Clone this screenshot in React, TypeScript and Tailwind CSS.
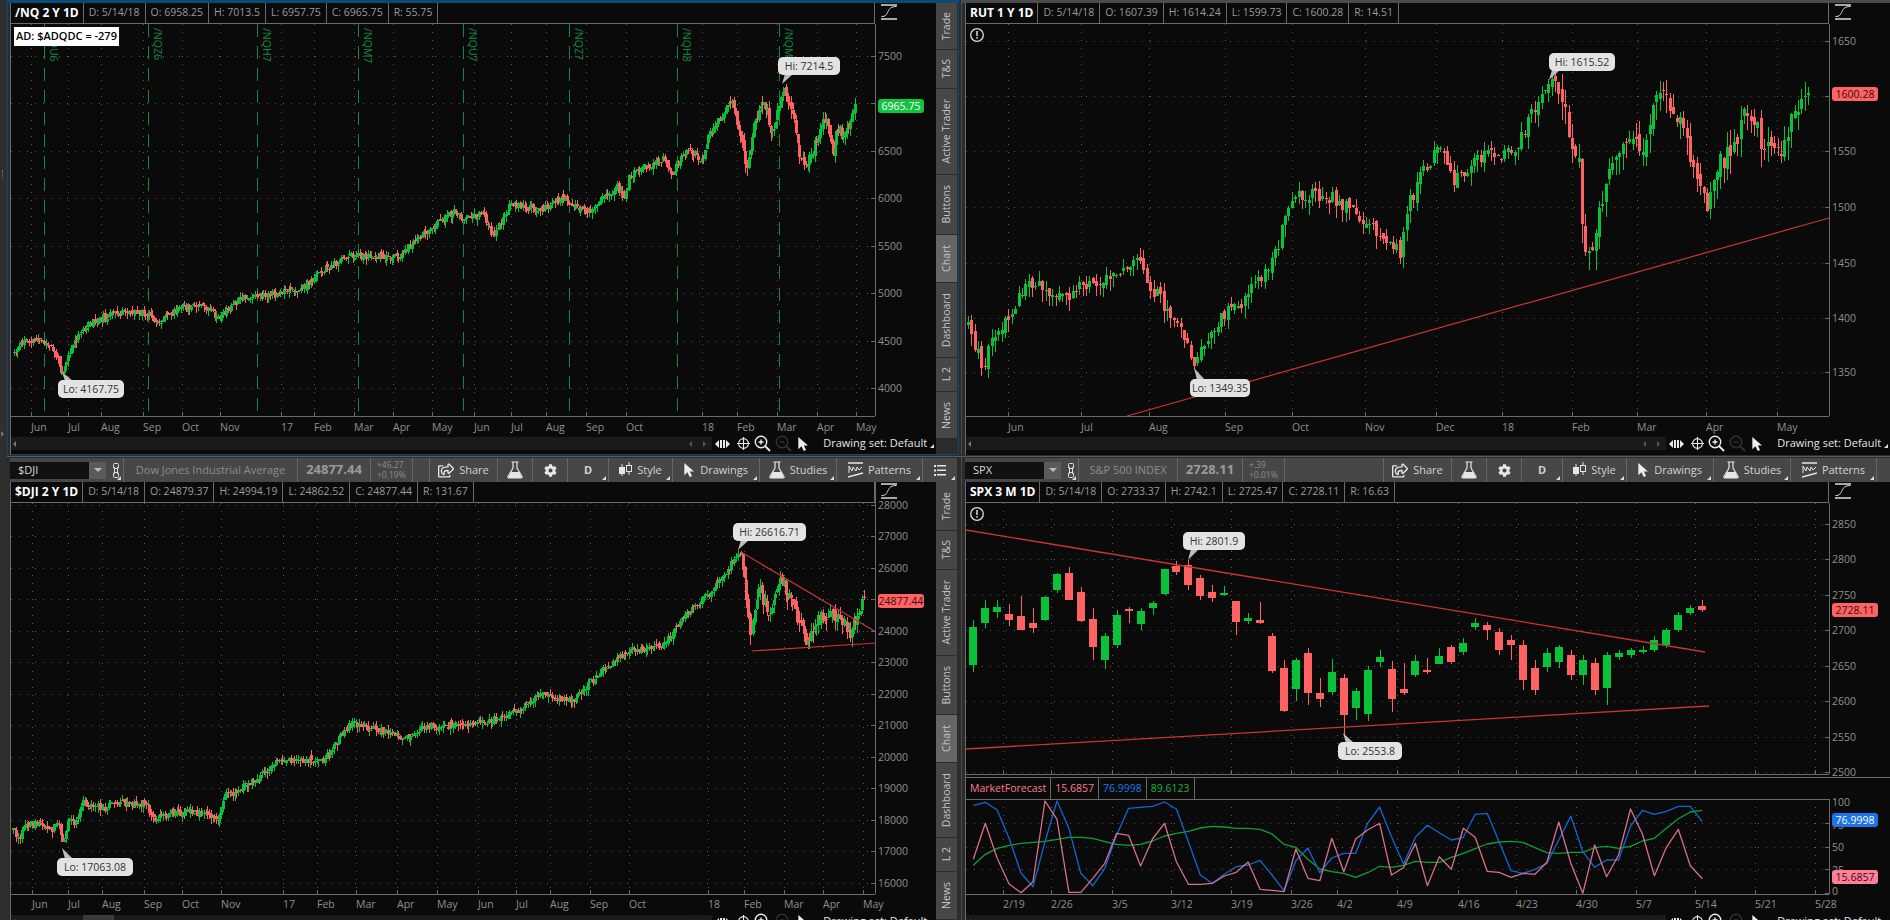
import type { ReactNode } from "react"
import { FaCog, FaRegShareSquare } from "react-icons/fa"

type Pt = [number, number]
type Bar = { x: number; open: number; close: number; high: number; low: number }

const GREEN = "#0ac13a"
const RED = "#ff6262"

// shrunk screenshot coords -> real coords
const up = (pts: Pt[]): Pt[] => pts.map(([x, y]) => [x * 1.2054, y * 1.2054])

function rng(seed: number) {
  let a = seed
  return () => {
    a = (a + 0x6d2b79f5) | 0
    let t = Math.imul(a ^ (a >>> 15), 1 | a)
    t = (t + Math.imul(t ^ (t >>> 7), 61 | t)) ^ t
    return ((t ^ (t >>> 14)) >>> 0) / 4294967296
  }
}

function interp(path: Pt[], x: number) {
  for (let i = 1; i < path.length; i++) {
    if (x <= path[i][0]) {
      const [x0, y0] = path[i - 1]
      const [x1, y1] = path[i]
      return y0 + ((y1 - y0) * (x - x0)) / (x1 - x0 || 1)
    }
  }
  return path[path.length - 1][1]
}

function makeBars(path: Pt[], n: number, seed: number, vol: (x: number) => number): Bar[] {
  const rand = rng(seed)
  const x0 = path[0][0]
  const dx = (path[path.length - 1][0] - x0) / (n - 1)
  let prev = path[0][1]
  return Array.from({ length: n }, (_, i) => {
    const x = x0 + i * dx
    const v = vol(x)
    const close = interp(path, x) + (rand() - 0.5) * v
    const open = prev + (rand() - 0.5) * v * 0.5
    prev = close
    const top = Math.min(open, close)
    const bot = Math.max(open, close)
    return { x, open, close, high: top - rand() * v * 0.7, low: bot + rand() * v * 0.9 }
  })
}

const nqPath: Pt[] = [
  [14, 352], [24, 341], [39, 339], [54, 350], [62, 372], [70, 350], [84, 328], [108, 315], [133, 311], [151, 316], [154, 325],
  [181, 307], [205, 307], [217, 319], [241, 299], [271, 295], [301, 289], [325, 268], [350, 256], [386, 256], [398, 256],
  [422, 235], [456, 210], [463, 220], [483, 213], [493, 237], [510, 205], [540, 210], [562, 198], [587, 212], [617, 187],
  [625, 197], [630, 175], [663, 158], [672, 175], [688, 148], [702, 160], [710, 133], [732, 100], [745, 157], [747, 170],
  [755, 120], [765, 103], [772, 135], [778, 107], [782, 87], [793, 110], [798, 150], [805, 167], [817, 140], [825, 117],
  [833, 153], [837, 128], [845, 137], [855, 103],
]

const rutPath: Pt[] = up([
  [803, 272], [810, 290], [815, 305], [825, 275], [835, 265], [850, 240], [860, 235], [875, 245], [885, 250], [900, 235],
  [920, 232], [935, 218], [945, 215], [955, 238], [970, 260], [980, 272], [990, 303], [1000, 285], [1015, 262], [1030, 250],
  [1050, 225], [1060, 205], [1070, 165], [1075, 160], [1100, 162], [1115, 170], [1130, 180], [1145, 195], [1162, 210],
  [1170, 165], [1185, 135], [1195, 120], [1205, 150], [1220, 140], [1230, 128], [1255, 128], [1270, 95], [1285, 70],
  [1295, 75], [1300, 100], [1310, 140], [1312, 190], [1320, 222], [1325, 180], [1335, 140], [1350, 115], [1362, 120],
  [1372, 85], [1380, 75], [1395, 100], [1402, 135], [1415, 170], [1425, 140], [1440, 120], [1450, 90], [1462, 120],
  [1475, 130], [1483, 110], [1495, 75], [1500, 78],
])

const djiPath: Pt[] = [
  [13, 828], [18, 840], [25, 825], [37, 822], [50, 832], [58, 820], [63, 848], [68, 822], [75, 822], [83, 803], [103, 808],
  [117, 802], [133, 805], [147, 803], [152, 820], [163, 813], [170, 813], [187, 812], [207, 813], [218, 823], [222, 800],
  [227, 793], [237, 792], [255, 780], [277, 762], [325, 759], [350, 723], [386, 732], [410, 738], [422, 727], [482, 723],
  [518, 711], [542, 693], [573, 702], [591, 681], [627, 651], [663, 645], [681, 621], [711, 591], [729, 567], [740, 552],
  [745, 579], [750, 639], [759, 591], [771, 615], [781, 579], [796, 615], [808, 645], [820, 615], [838, 615], [850, 633],
  [858, 615], [864, 600],
]

const nqBars = makeBars(nqPath, 500, 11, (x) => (x > 740 ? 11 : 7))
const rutBars = makeBars(rutPath, 250, 23, (x) => (x > 1560 ? 22 : 14))
const djiBars = makeBars(djiPath, 500, 37, (x) => (x > 740 ? 12 : 7))

// [green, body top, body bottom, wick top, wick bottom], read off a 3x crop at y = 560 + v / 3
const spxMid: [number, number, number, number, number][] = [
  [0, 162, 180, 132, 198], [0, 168, 210, 108, 210], [0, 189, 204, 144, 218], [1, 111, 180, 108, 183], [1, 42, 90, 40, 100],
  [0, 39, 120, 21, 120], [0, 96, 183, 81, 186], [0, 177, 261, 144, 300], [1, 228, 300, 219, 327], [1, 165, 255, 150, 264],
  [0, 147, 153, 141, 189], [1, 153, 192, 144, 210], [1, 129, 144, 123, 165], [1, 27, 102, 27, 105], [0, 18, 36, 3, 45],
  [0, 15, 75, 0, 90], [0, 54, 108, 45, 120], [0, 96, 114, 75, 126], [1, 99, 105, 78, 108], [0, 123, 186, 123, 225],
  [1, 174, 183, 159, 192], [0, 180, 189, 126, 192], [0, 228, 333, 219, 339], [0, 324, 453, 300, 456], [1, 300, 387, 294, 423],
  [0, 279, 399, 264, 435], [0, 399, 417, 354, 441], [1, 336, 396, 297, 405], [0, 354, 465, 342, 525], [1, 393, 444, 384, 480],
  [1, 330, 462, 318, 483], [1, 291, 306, 270, 321], [0, 327, 417, 303, 456], [0, 387, 399, 309, 405], [1, 303, 345, 285, 351],
  [0, 330, 336, 294, 342], [1, 288, 312, 264, 312], [0, 261, 306, 255, 312],
]

const spxRows: [number, number, number, number, number][] = [
  [1, 627, 665, 620, 672], [1, 608, 623, 600, 628], [1, 607, 612, 600, 618],
  ...spxMid.map(([g, a, b, c, d]) => [g, 560 + a / 3, 560 + b / 3, 560 + c / 3, 560 + d / 3] as [number, number, number, number, number]),
  [1, 643, 652, 638, 655], [1, 623, 627, 618, 630], [0, 625, 630, 622, 640], [0, 632, 650, 628, 655], [0, 640, 645, 635, 660],
  [0, 645, 680, 640, 690], [0, 668, 690, 660, 695], [1, 653, 667, 648, 672], [1, 647, 662, 645, 668], [0, 655, 675, 650, 680],
  [1, 660, 675, 655, 685], [0, 663, 690, 658, 695], [1, 655, 688, 652, 705], [1, 653, 657, 650, 660], [1, 650, 655, 648, 658],
  [1, 650, 652, 646, 654], [1, 640, 650, 636, 652], [1, 630, 645, 628, 648], [1, 615, 630, 612, 632], [1, 608, 613, 605, 615],
  [0, 606, 610, 600, 612],
]

const idxX = (i: number) => 973.3 + i * 11.95
const mfY = (vals: number[]) => vals.map((v, i) => `${idxX(i).toFixed(1)},${(740 + v / 3).toFixed(1)}`).join(" ")

const mfBlue = [
  196, 187, 210, 295, 400, 440, 305, 183, 265, 400, 437, 385, 285, 205, 202, 199, 186, 207, 305, 405, 430, 403, 380, 375, 361, 405,
  452, 362, 324, 398, 354, 340, 340, 250, 201, 290, 372, 292, 256, 278, 300, 292, 223, 220, 305, 392, 400, 388, 370, 300, 228, 335,
  382, 360, 360, 258, 211, 223, 214, 199, 199, 245,
]
const mfPink = [
  358, 250, 355, 432, 458, 425, 183, 238, 457, 457, 415, 370, 280, 286, 378, 297, 250, 365, 433, 433, 430, 408, 397, 366, 448, 451,
  455, 327, 415, 422, 295, 395, 297, 270, 250, 405, 383, 310, 437, 350, 388, 265, 292, 394, 397, 412, 400, 403, 367, 246, 370, 460,
  315, 410, 345, 207, 283, 407, 322, 268, 377, 416,
]
const mfGreen = [
  376, 343, 325, 316, 310, 307, 304, 298, 292, 292, 295, 305, 313, 316, 313, 303, 288, 280, 274, 264, 259, 261, 265, 265, 268, 282,
  313, 322, 358, 387, 395, 400, 412, 398, 379, 382, 376, 364, 367, 367, 352, 340, 326, 312, 306, 304, 307, 323, 338, 340, 337, 337,
  323, 319, 325, 319, 303, 295, 265, 236, 216, 211,
]

function Bars({ bars, body }: { bars: Bar[]; body: number }) {
  return (
    <g shapeRendering="crispEdges">
      {bars.map((b, i) => {
        const isUp = b.close < b.open
        const c = isUp ? GREEN : RED
        const x = Math.round(b.x)
        const top = Math.min(b.open, b.close)
        const h = Math.max(Math.abs(b.open - b.close), 1)
        return (
          <g key={i} fill={c}>
            <rect x={x} y={b.high} width={1} height={b.low - b.high} />
            <rect x={x - Math.floor(body / 2)} y={top} width={body} height={h} />
          </g>
        )
      })}
    </g>
  )
}

function Grid({ xs, ys, left, right, top, bottom }: { xs: number[]; ys: number[]; left: number; right: number; top: number; bottom: number }) {
  return (
    <g stroke="#5a5a5a" strokeDasharray="1 7" shapeRendering="crispEdges">
      {xs.map((x) => <line key={x} x1={x} x2={x} y1={top} y2={bottom} />)}
      {ys.map((y) => <line key={y} x1={left} x2={right} y1={y} y2={y} />)}
    </g>
  )
}

function Axes({ axis, left, top, bottom, xs, ys }: { axis: number; left: number; top: number; bottom: number; xs: number[]; ys: number[] }) {
  return (
    <g stroke="#6a6a6a" shapeRendering="crispEdges">
      <line x1={axis} x2={axis} y1={top} y2={bottom} />
      <line x1={left} x2={axis} y1={bottom} y2={bottom} />
      {xs.map((x) => <line key={x} x1={x} x2={x} y1={bottom - 4} y2={bottom} />)}
      {ys.map((y) => <line key={y} x1={axis - 4} x2={axis} y1={y} y2={y} />)}
    </g>
  )
}

function AxisText({ x, y, children }: { x: number; y: number; children: ReactNode }) {
  return <text x={x} y={y} fill="#8f8f8f" fontSize="10.5" dominantBaseline="central">{children}</text>
}

function Tag({ x, y, bg, fg, children }: { x: number; y: number; bg: string; fg: string; children: ReactNode }) {
  return (
    <g>
      <rect x={x} y={y - 7} width={46} height={14} rx={3} fill={bg} />
      <text x={x + 23} y={y} fill={fg} fontSize="10.5" textAnchor="middle" dominantBaseline="central">{children}</text>
    </g>
  )
}

function Callout({ x, y, w, tx, ty, children }: { x: number; y: number; w: number; tx: number; ty: number; children: ReactNode }) {
  const below = ty > y
  const by = below ? y + 17 : y + 1
  return (
    <g>
      <polygon points={`${tx},${ty} ${tx + 3},${by} ${tx + 11},${by}`} fill="#bdbdbd" />
      <rect x={x} y={y} width={w} height={18} rx={5} fill="#e3e3e3" />
      <text x={x + w / 2} y={y + 9} fill="#333" fontSize="10.5" textAnchor="middle" dominantBaseline="central">{children}</text>
    </g>
  )
}

function Warn({ x, y }: { x: number; y: number }) {
  return (
    <g>
      <circle cx={x} cy={y} r={6.3} fill="none" stroke="#ddd" strokeWidth="1.3" />
      <rect x={x - 0.75} y={y - 4} width={1.5} height={5} fill="#ddd" />
      <rect x={x - 0.75} y={y + 2} width={1.5} height={1.6} fill="#ddd" />
    </g>
  )
}

const topTicks = [31, 68, 101, 143, 182, 220, 281, 314, 354, 393, 432, 474, 511, 546, 586, 626, 702, 737, 777, 817, 856]
const botTicks = [32, 68, 102, 144, 182, 221, 283, 317, 356, 397, 437, 478, 516, 550, 590, 629, 708, 744, 784, 823, 863]
const twoYear = ["Jun", "Jul", "Aug", "Sep", "Oct", "Nov", "17", "Feb", "Mar", "Apr", "May", "Jun", "Jul", "Aug", "Sep", "Oct", "18", "Feb", "Mar", "Apr", "May"]

function NqChart() {
  const ys = [56, 103, 151, 198, 246, 293, 341, 388]
  const px = ["7500", "7000", "6500", "6000", "5500", "5000", "4500", "4000"]
  const rolls: [number, string][] = [[44, "/NQU6"], [148, "/NQZ6"], [257, "/NQH7"], [358, "/NQM7"], [463, "/NQU7"], [569, "/NQZ7"], [677, "/NQH8"], [779, "/NQM8"]]
  return (
    <svg width={925} height={413} viewBox="11 24 925 413" className="block shrink-0">
      <Grid xs={topTicks} ys={ys} left={11} right={875} top={24} bottom={416} />
      {rolls.map(([x, name]) => (
        <g key={name}>
          <line x1={x} x2={x} y1={24} y2={416} stroke="#0f8a40" strokeDasharray="13 9" shapeRendering="crispEdges" />
          <text x={x + 3} y={28} fill="#0f8a40" fontSize="10.5" transform={`rotate(90 ${x + 3} 28)`} dominantBaseline="text-after-edge">{name}</text>
        </g>
      ))}
      <Bars bars={nqBars} body={3} />
      <Axes axis={875} left={11} top={24} bottom={416} xs={topTicks} ys={ys} />
      {ys.map((y, i) => i !== 1 && <AxisText key={y} x={878} y={y}>{px[i]}</AxisText>)}
      {topTicks.map((x, i) => <AxisText key={x} x={x} y={427}>{twoYear[i]}</AxisText>)}
      <Tag x={878} y={106} bg="#12c43d" fg="#fff">6965.75</Tag>
      <Callout x={778} y={57} w={62} tx={782} ty={84}>Hi: 7214.5</Callout>
      <Callout x={58} y={380} w={66} tx={62} ty={372}>Lo: 4167.75</Callout>
    </svg>
  )
}

function RutChart() {
  const ticks = [1008, 1081, 1149, 1225, 1292, 1365, 1436, 1502, 1572, 1637, 1706, 1777]
  const names = ["Jun", "Jul", "Aug", "Sep", "Oct", "Nov", "Dec", "18", "Feb", "Mar", "Apr", "May"]
  const ys = [41, 96, 151, 207, 263, 318, 372]
  const px = ["1650", "1600", "1550", "1500", "1450", "1400", "1350"]
  return (
    <svg width={924} height={413} viewBox="966 24 924 413" className="block shrink-0">
      <Grid xs={ticks} ys={ys} left={966} right={1829} top={24} bottom={416} />
      <Bars bars={rutBars} body={3} />
      <line x1={1127} y1={416} x2={1829} y2={218} stroke="#c93434" strokeWidth="1.2" />
      <Axes axis={1829} left={966} top={24} bottom={416} xs={ticks} ys={ys} />
      {ys.map((y, i) => i !== 1 && <AxisText key={y} x={1832} y={y}>{px[i]}</AxisText>)}
      {ticks.map((x, i) => <AxisText key={x} x={x} y={427}>{names[i]}</AxisText>)}
      <Tag x={1832} y={94} bg={RED} fg="#3a0d0d">1600.28</Tag>
      <Callout x={1549} y={53} w={66} tx={1549} ty={80}>Hi: 1615.52</Callout>
      <Callout x={1190} y={379} w={60} tx={1194} ty={368}>Lo: 1349.35</Callout>
      <Warn x={977} y={35} />
    </svg>
  )
}

function DjiChart() {
  const ys = [505, 536, 568, 599, 631, 662, 694, 725, 757, 788, 820, 851, 883]
  const px = ["28000", "27000", "26000", "25000", "24000", "23000", "22000", "21000", "20000", "19000", "18000", "17000", "16000"]
  const vs = [505, 536, 568, 631, 662, 694, 725, 757, 788, 820, 851, 883]
  return (
    <svg width={925} height={412} viewBox="11 503 925 412" className="block shrink-0 overflow-visible">
      <Grid xs={botTicks} ys={ys} left={11} right={875} top={503} bottom={894} />
      <Bars bars={djiBars} body={3} />
      <g stroke="#c93434" strokeWidth="1.2">
        <line x1={741} y1={552} x2={876} y2={632} />
        <line x1={752} y1={651} x2={876} y2={643} />
      </g>
      <Axes axis={875} left={11} top={482} bottom={894} xs={botTicks} ys={ys} />
      {ys.map((y, i) => (vs.includes(y) ? <AxisText key={y} x={878} y={y}>{px[i]}</AxisText> : null))}
      {botTicks.map((x, i) => <AxisText key={x} x={x} y={904}>{twoYear[i]}</AxisText>)}
      <Tag x={878} y={601} bg={RED} fg="#3a0d0d">24877.44</Tag>
      <Callout x={733} y={523} w={73} tx={738} ty={550}>Hi: 26616.71</Callout>
      <Callout x={57} y={858} w={76} tx={62} ty={848}>Lo: 17063.08</Callout>
    </svg>
  )
}

const spxTicks = [1003, 1051, 1112, 1171, 1231, 1291, 1337, 1397, 1458, 1516, 1576, 1636, 1695, 1755, 1815]
const spxDates = ["2/19", "2/26", "3/5", "3/12", "3/19", "3/26", "4/2", "4/9", "4/16", "4/23", "4/30", "5/7", "5/14", "5/21", "5/28"]

function SpxChart() {
  const ys = [524, 559, 595, 630, 666, 701, 737, 772]
  const px = ["2850", "2800", "2750", "2700", "2650", "2600", "2550", "2500"]
  return (
    <svg width={924} height={273} viewBox="966 503 924 273" className="block shrink-0">
      <Grid xs={spxTicks} ys={ys} left={966} right={1829} top={503} bottom={774} />
      <g shapeRendering="crispEdges">
        {spxRows.map(([g, a, b, c, d], i) => {
          const x = Math.round(idxX(i))
          const fill = g ? GREEN : RED
          return (
            <g key={i} fill={fill}>
              <rect x={x} y={c} width={1} height={d - c} />
              <rect x={x - 4} y={a} width={8} height={Math.max(b - a, 1.5)} />
            </g>
          )
        })}
      </g>
      <g stroke="#c93434" strokeWidth="1.3">
        <line x1={966} y1={530} x2={1705} y2={652} />
        <line x1={966} y1={749} x2={1709} y2={706} />
      </g>
      <Axes axis={1829} left={966} top={503} bottom={774} xs={spxTicks} ys={ys} />
      {ys.map((y, i) => <AxisText key={y} x={1832} y={y}>{px[i]}</AxisText>)}
      <Tag x={1832} y={610} bg={RED} fg="#3a0d0d">2728.11</Tag>
      <Callout x={1183} y={532} w={62} tx={1188} ty={560}>Hi: 2801.9</Callout>
      <Callout x={1338} y={742} w={64} tx={1343} ty={733}>Lo: 2553.8</Callout>
      <Warn x={977} y={514} />
    </svg>
  )
}

function ForecastChart() {
  const ys = [823, 847, 869]
  const all = [...ys, 893]
  return (
    <svg width={924} height={116} viewBox="966 799 924 116" className="block shrink-0 overflow-visible">
      <Grid xs={spxTicks} ys={ys} left={966} right={1829} top={799} bottom={894} />
      <g fill="none" strokeWidth="1.3" strokeLinejoin="round">
        <polyline points={mfY(mfGreen)} stroke="#0ea032" />
        <polyline points={mfY(mfBlue)} stroke="#1466d2" />
        <polyline points={mfY(mfPink)} stroke="#d76f8b" />
      </g>
      <Axes axis={1829} left={966} top={799} bottom={894} xs={spxTicks} ys={all} />
      <line x1={966} x2={1829} y1={799.5} y2={799.5} stroke="#6a6a6a" />
      <AxisText x={1832} y={802}>100</AxisText>
      <AxisText x={1832} y={825}>75</AxisText>
      <AxisText x={1832} y={847}>50</AxisText>
      <AxisText x={1832} y={870}>25</AxisText>
      <AxisText x={1832} y={891}>0</AxisText>
      {spxTicks.map((x, i) => <AxisText key={x} x={x} y={904}>{spxDates[i]}</AxisText>)}
      <Tag x={1832} y={820} bg="#1a73e8" fg="#fff">76.9998</Tag>
      <Tag x={1832} y={877} bg="#ff7f97" fg="#3a0d1a">15.6857</Tag>
    </svg>
  )
}

function CurveIcon() {
  return (
    <svg width="16" height="16" viewBox="0 0 16 16" fill="none" stroke="#ddd" className="mt-[1px]">
      <path d="M0 1h16M0 15h16" strokeWidth="1.5" />
      <path d="M.5 12.5c4.5 0 5-2 6.5-5s3-5 8.5-5" strokeWidth="1" />
    </svg>
  )
}

function InfoBar({ title, cells }: { title: string; cells: string[] }) {
  return (
    <div className="flex h-[21px] shrink-0 bg-[#0a0a0a]">
      <div className="flex flex-1 border-b border-r border-[#6a6a6a]">
        <div className="flex items-center whitespace-nowrap border-r border-[#6a6a6a] px-[4px] text-[12px] font-bold text-white">{title}</div>
        {cells.map((c) => (
          <div key={c} className="flex items-center whitespace-nowrap border-r border-[#6a6a6a] px-[5px] text-[10.5px] text-[#9a9a9a]">{c}</div>
        ))}
      </div>
      <div className="flex w-[61px] justify-start pl-[6px]">
        <CurveIcon />
      </div>
    </div>
  )
}

function PanIcon() {
  return (
    <svg width="15" height="10" viewBox="0 0 15 10" fill="#e8e8e8">
      <path d="M0 5l4-4v8zM15 5l-4-4v8z" />
      <rect x="5" y="1" width="2" height="8" />
      <rect x="8" y="1" width="2" height="8" />
    </svg>
  )
}

function CrossIcon() {
  return (
    <svg width="13" height="13" viewBox="0 0 14 14" fill="none" stroke="#e8e8e8" strokeWidth="1.2" className="ml-[7px]">
      <circle cx="7" cy="7" r="5.3" />
      <path d="M7 0v14M0 7h14" />
    </svg>
  )
}

function ZoomIcon({ color, plus }: { color: string; plus?: boolean }) {
  return (
    <svg width="17" height="17" viewBox="0 0 17 17" fill="none" stroke={color} strokeWidth="1.4" className="ml-[4px]">
      <circle cx="7" cy="7" r="5.7" />
      <path d={plus ? "M4.5 7h5M7 4.5v5" : "M4.5 7h5"} />
      <path d="M11 11l5 5" strokeWidth="1.8" />
    </svg>
  )
}

function CursorIcon({ size = 14 }: { size?: number }) {
  return (
    <svg width={size * 0.8} height={size} viewBox="0 0 12 16" fill="#eee">
      <path d="M0 0v14l3.6-3.4L6.2 16l2.6-1.1-2.5-5.2H11z" />
    </svg>
  )
}

function Corner() {
  return <span className="absolute bottom-[2px] right-[2px] border-b-[4px] border-l-[4px] border-b-[#ddd] border-l-transparent" />
}

function ScrollRow({ thumb }: { thumb?: boolean }) {
  return (
    <div className="flex h-[13px] shrink-0 bg-[#0a0a0a]">
      <div className="relative flex flex-1 items-center justify-between bg-[#1a1a1a] pl-[2px] pr-[6px]">
        <span className="h-0 w-0 border-y-[3px] border-r-[3px] border-y-transparent border-r-[#777]" />
        {thumb && <span className="absolute left-[72px] top-0 h-full w-[31px] bg-[#3a3a3a]" />}
        <div className="flex items-center gap-[11px]">
          <span className="h-0 w-0 border-y-[3px] border-r-[3px] border-y-transparent border-r-[#555]" />
          <span className="h-0 w-0 border-y-[3px] border-l-[3px] border-y-transparent border-l-[#555]" />
        </div>
      </div>
      <div className="relative flex w-[224px] items-center pl-[3px]">
        <PanIcon />
        <CrossIcon />
        <ZoomIcon color="#eee" plus />
        <ZoomIcon color="#333" />
        <span className="ml-[6px]"><CursorIcon /></span>
        <span className="ml-[14px] whitespace-nowrap text-[11px] text-[#e4e4e4]">Drawing set: Default</span>
        <Corner />
      </div>
    </div>
  )
}

function SideTabs({ tabs }: { tabs: { label: string; h: string; on?: boolean }[] }) {
  return (
    <div className="flex w-[21px] shrink-0 flex-col">
      {tabs.map((t) => (
        <div key={t.label} className={`flex w-full items-center justify-center border-b border-[#2c2c2c] ${t.h} ${t.on ? "bg-[#666666]" : "bg-[#474747]"}`}>
          <span className="rotate-180 whitespace-nowrap text-[10.5px] text-[#c6c6c6] [writing-mode:vertical-rl]">{t.label}</span>
        </div>
      ))}
    </div>
  )
}

const topTabs = [
  { label: "Trade", h: "h-[47px]" },
  { label: "T&S", h: "h-[39px]" },
  { label: "Active Trader", h: "h-[86px]" },
  { label: "Buttons", h: "h-[60px]" },
  { label: "Chart", h: "h-[48px]", on: true },
  { label: "Dashboard", h: "h-[75px]" },
  { label: "L 2", h: "h-[34px]" },
  { label: "News", h: "h-[47px]" },
]

const botTabs = [
  { label: "Trade", h: "h-[49px]" },
  { label: "T&S", h: "h-[39px]" },
  { label: "Active Trader", h: "h-[86px]" },
  { label: "Buttons", h: "h-[59px]" },
  { label: "Chart", h: "h-[48px]", on: true },
  { label: "Dashboard", h: "h-[75px]" },
  { label: "L 2", h: "h-[34px]" },
  { label: "News", h: "h-[48px]" },
]

function FlaskIcon() {
  return (
    <svg width="16" height="18" viewBox="0 0 16 18" fill="none" stroke="#e6e6e6" strokeWidth="1.2">
      <path d="M4.5 1h7M6 1v6L1 15.5c-.4.8 0 1.5 1 1.5h12c1 0 1.4-.7 1-1.5L10 7V1" />
      <path d="M4 11h8l3 6H1z" fill="#e6e6e6" stroke="none" />
    </svg>
  )
}

function CandleIcon() {
  return (
    <svg width="13" height="16" viewBox="0 0 13 16" fill="none" stroke="#e6e6e6">
      <path d="M3 2v12M10 0v13" />
      <rect x="0.5" y="5.5" width="5" height="6" fill="#e6e6e6" />
      <rect x="7.5" y="3.5" width="5" height="6" fill="#474747" />
    </svg>
  )
}

function PatternIcon() {
  return (
    <svg width="15" height="16" viewBox="0 0 15 16" fill="none" stroke="#e6e6e6">
      <path d="M0 1h15" strokeWidth="1.5" />
      <path d="M1 11V4l3 5 1-4 3 4 1-4 2 3 3-3" />
      <path d="M0 15l15-4" strokeWidth="1.5" />
    </svg>
  )
}

function MenuIcon() {
  return (
    <svg width="12" height="11" viewBox="0 0 12 11" fill="#e6e6e6">
      <rect x="0" y="0" width="2" height="2" />
      <rect x="3" y="0" width="9" height="1.5" />
      <rect x="0" y="4.5" width="2" height="2" />
      <rect x="3" y="4.5" width="9" height="1.5" />
      <rect x="0" y="9" width="2" height="2" />
      <rect x="3" y="9" width="9" height="1.5" />
    </svg>
  )
}

function LinkIcon() {
  return (
    <svg width="6" height="15" viewBox="0 0 6 15" fill="none" stroke="#ddd">
      <rect x="0.5" y="0.5" width="5" height="5" rx="1" />
      <rect x="0.5" y="9.5" width="5" height="5" rx="1" />
      <path d="M1.5 4v7M4.5 4v7" />
    </svg>
  )
}

function ToolItem({ w, children, corner }: { w: string; children: ReactNode; corner?: boolean }) {
  return (
    <div className={`relative flex h-full shrink-0 items-center justify-center gap-[5px] border-r border-[#666] text-[11px] text-[#d2d2d2] ${w}`}>
      {children}
      {corner && <Corner />}
    </div>
  )
}

function Toolbar({ symbol, name, nameW, price, priceW, chg, pct, gapW, menu }: { symbol: string; name: string; nameW: string; price: string; priceW: string; chg: string; pct: string; gapW: string; menu?: boolean }) {
  return (
    <div className="flex h-[24px] shrink-0 bg-[#474747]">
      <div className="relative flex h-full w-[114px] shrink-0 items-center border-r border-[#666]">
        <div className="flex h-[17px] w-[96px] items-center justify-between bg-[#111] pl-[8px] text-[11px] text-[#d8d8d8]">
          {symbol}
          <span className="flex h-full w-[17px] items-center justify-center bg-[#5a5a5a]">
            <span className="border-x-[4px] border-t-[4px] border-x-transparent border-t-[#bbb]" />
          </span>
        </div>
        <span className="ml-[7px]"><LinkIcon /></span>
        <Corner />
      </div>
      <div className={`flex shrink-0 items-center justify-center whitespace-nowrap border-r border-[#666] text-[11px] text-[#8c8c8c] ${nameW}`}>{name}</div>
      <div className={`flex shrink-0 items-center justify-center border-r border-[#666] text-[13px] font-bold text-[#9a9a9a] ${priceW}`}>{price}</div>
      <div className="flex w-[42px] shrink-0 flex-col justify-center border-r border-[#666] pl-[6px] text-[8.5px] leading-[10px] text-[#8c8c8c]">
        <span>{chg}</span>
        <span>{pct}</span>
      </div>
      <div className={`shrink-0 border-r border-[#666] ${gapW}`} />
      <ToolItem w="w-[68px]"><FaRegShareSquare className="h-[15px] w-[16px] text-[#e6e6e6]" />Share</ToolItem>
      <ToolItem w="w-[35px]"><FlaskIcon /></ToolItem>
      <ToolItem w="w-[35px]"><FaCog className="h-[13px] w-[13px] text-[#e6e6e6]" /></ToolItem>
      <ToolItem w="w-[41px]" corner><span className="font-bold">D</span></ToolItem>
      <ToolItem w="w-[64px]" corner><CandleIcon />Style</ToolItem>
      <ToolItem w="w-[87px]" corner><CursorIcon />Drawings</ToolItem>
      <ToolItem w="w-[77px]" corner><FlaskIcon />Studies</ToolItem>
      <ToolItem w="w-[86px]" corner><PatternIcon />Patterns</ToolItem>
      {menu && <ToolItem w="w-[34px] border-r-0" corner><MenuIcon /></ToolItem>}
    </div>
  )
}

function Grip() {
  return (
    <div className="relative h-full w-[7px] shrink-0 bg-[#2f2f2f]">
      <div className="absolute left-[2px] top-[170px] h-[8px] w-px border-l border-dotted border-[#777]" />
      <span className="absolute left-[1px] top-[431px] border-y-[3px] border-l-[3px] border-y-transparent border-l-[#777]" />
    </div>
  )
}

function App() {
  return (
    <div className="flex h-[920px] w-[1890px] overflow-hidden bg-[#2c2c2c] font-['Open_Sans',sans-serif]">
      <Grip />
      <div className="flex w-[1883px] flex-col">
        {/* top row */}
        <div className="flex h-[456px] shrink-0">
          <div className="flex h-[455px] w-[952px] shrink-0 border border-t-[3px] border-[#0b4b73] pl-[2px]">
            <div className="flex h-full w-[926px] flex-col border-l border-[#6a6a6a] bg-[#0a0a0a]">
              <InfoBar title="/NQ 2 Y 1D" cells={["D: 5/14/18", "O: 6958.25", "H: 7013.5", "L: 6957.75", "C: 6965.75", "R: 55.75"]} />
              <div className="relative">
                <NqChart />
                <div className="absolute left-[3px] top-[3px] bg-white px-[2px] py-[1px] text-[11px] font-semibold whitespace-nowrap text-black">AD: $ADQDC = -279</div>
              </div>
              <ScrollRow />
            </div>
            <SideTabs tabs={topTabs} />
          </div>
          <div className="ml-[2px] flex h-[455px] flex-1 flex-col border-l border-t-[3px] border-[#4a4a4a] pl-[3px]">
            <div className="flex h-full flex-col border-l border-[#6a6a6a] bg-[#0a0a0a]">
              <InfoBar title="RUT 1 Y 1D" cells={["D: 5/14/18", "O: 1607.39", "H: 1614.24", "L: 1599.73", "C: 1600.28", "R: 14.51"]} />
              <RutChart />
              <ScrollRow />
            </div>
          </div>
        </div>

        {/* bottom row */}
        <div className="flex h-[464px] shrink-0 border-t border-[#5a5a5a]">
          <div className="flex w-[954px] shrink-0 flex-col pl-[3px] pt-[1px]">
            <div className="w-[947px]">
              <Toolbar symbol="$DJI" name="Dow Jones Industrial Average" nameW="w-[174px]" price="24877.44" priceW="w-[73px]" chg="+46.27" pct="+0.19%" gapW="w-[17px]" menu />
            </div>
            <div className="flex h-[438px] w-[947px]">
              <div className="flex h-full w-[926px] flex-col overflow-hidden border-l border-[#6a6a6a] bg-[#0a0a0a]">
                <InfoBar title="$DJI 2 Y 1D" cells={["D: 5/14/18", "O: 24879.37", "H: 24994.19", "L: 24862.52", "C: 24877.44", "R: 131.67"]} />
                <DjiChart />
                <ScrollRow thumb />
              </div>
              <SideTabs tabs={botTabs} />
            </div>
          </div>
          <div className="flex flex-1 flex-col border-l border-[#4a4a4a] pl-[3px] pt-[1px]">
            <Toolbar symbol="SPX" name="S&P 500 INDEX" nameW="w-[99px]" price="2728.11" priceW="w-[65px]" chg="+.39" pct="+0.01%" gapW="w-[99px]" />
            <div className="flex h-[438px] flex-col overflow-hidden border-l border-[#6a6a6a] bg-[#0a0a0a]">
              <InfoBar title="SPX 3 M 1D" cells={["D: 5/14/18", "O: 2733.37", "H: 2742.1", "L: 2725.47", "C: 2728.11", "R: 16.63"]} />
              <SpxChart />
              <div className="h-[2px] shrink-0 border-b border-[#6a6a6a]" />
              <div className="flex h-[21px] shrink-0 text-[10.5px]">
                <div className="flex items-center border-r border-[#6a6a6a] px-[4px] text-[#ff7a90]">MarketForecast</div>
                <div className="flex items-center border-r border-[#6a6a6a] px-[4px] text-[#ff7a90]">15.6857</div>
                <div className="flex items-center border-r border-[#6a6a6a] px-[4px] text-[#1f7ae0]">76.9998</div>
                <div className="flex items-center border-r border-[#6a6a6a] px-[4px] text-[#12b53a]">89.6123</div>
              </div>
              <ForecastChart />
              <ScrollRow />
            </div>
          </div>
        </div>
      </div>
    </div>
  )
}

export default App
